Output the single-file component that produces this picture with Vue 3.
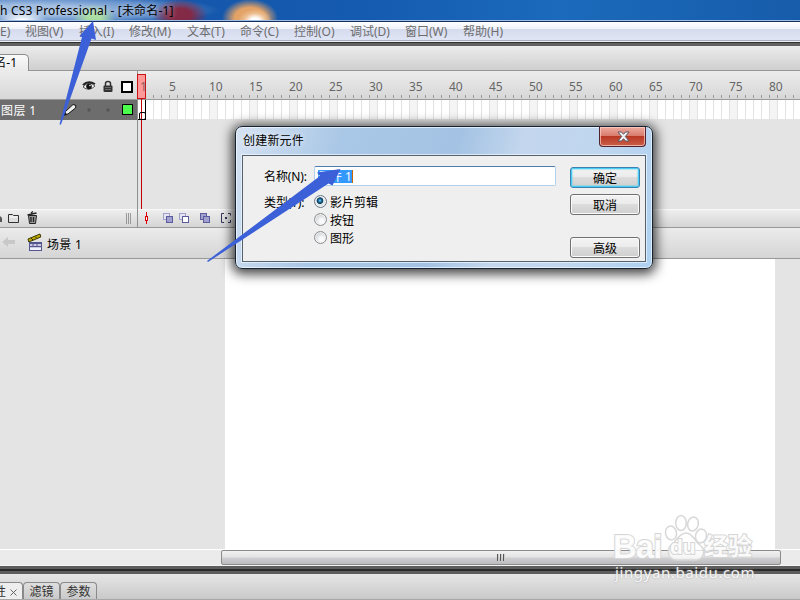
<script setup>
import { ref } from 'vue'

const menus = ['视图(V)', '插入(I)', '修改(M)', '文本(T)', '命令(C)', '控制(O)', '调试(D)', '窗口(W)', '帮助(H)']
const marks = Array.from({ length: 16 }, (_, i) => (i + 1) * 5)
const types = ['影片剪辑', '按钮', '图形']

const selectedType = ref('影片剪辑')
const dialogOpen = ref(true)

function closeDialog() {
  dialogOpen.value = false
}
</script>

<template>
  <div class="app">
    <header class="titlebar"><span class="titlebar__text">h CS3 Professional - [未命名-1]</span></header>

    <nav class="menubar">
      <span>E)</span>
      <span v-for="menu in menus" :key="menu">{{ menu }}</span>
    </nav>

    <div class="doc-tabs"><div class="doc-tab">名-1</div></div>

    <section class="timeline">
      <div class="layers">
        <div class="layers__head">
          <svg class="layers__icons" width="60" height="28" viewBox="0 0 60 28">
            <path d="M1 15Q7 8 13 14Q7 20 1 15Z" fill="#f6f6f6" stroke="#555" stroke-width="1" />
            <path d="M1 13Q6 8 13 12" fill="none" stroke="#222" stroke-width="2" />
            <circle cx="7" cy="14.5" r="2.8" fill="#111" />
            <circle cx="8" cy="13.5" r=".8" fill="#fff" />
            <path d="M23.500 14v-2.500q0-2 2.500-2t2.500 2v2.500" fill="none" stroke="#333" stroke-width="1.500" />
            <rect x="21.500" y="13.500" width="9" height="6.500" rx="1" fill="#333" />
            <path d="M23 15.500h6M23 17.500h6" stroke="#777" stroke-width=".8" />
            <rect x="40" y="10" width="10" height="10" fill="#fff" stroke="#000" stroke-width="2" />
          </svg>
        </div>
        <div class="layer">
          <span class="layer__name">图层 1</span>
          <svg class="layer__icons" width="80" height="20" viewBox="0 0 80 20">
            <path d="M7 15L8.500 11.500L16 4.500L19 5.500L18.500 8L11 14Z" fill="#eee" stroke="#111" stroke-width="1" />
            <path d="M6 16l4-1.500-2-2.500z" fill="#111" />
            <circle cx="32" cy="10" r="1.700" fill="#555" />
            <circle cx="51" cy="10" r="1.700" fill="#555" />
            <rect x="65.500" y="4.500" width="10" height="10" fill="#4cff4c" stroke="#000" />
          </svg>
        </div>
        <div class="layers__empty"></div>
        <div class="layers__foot">
          <svg width="137" height="18" viewBox="0 0 137 18">
            <path d="M0 6l2 2v4H0" fill="#555" />
            <path d="M8.500 4.500h4l1 1h5v7h-10z" fill="#ddd" stroke="#333" />
            <path d="M9.500 7h8" stroke="#fff" />
            <path d="M28.500 5.500h8l-1 8h-6z" fill="#999" stroke="#222" />
            <path d="M27.500 5l9-2M31 3l2-1.500M31 7v5M33.500 7v5" fill="none" stroke="#222" stroke-width="1.300" />
            <path d="M126.500 3v11M128.500 3v11M130.500 3v11" stroke="#999" />
          </svg>
        </div>
      </div>

      <div class="frames">
        <div class="ruler">
          <div class="ruler__marks">
            <span v-for="mark in marks" :key="mark">{{ mark }}</span>
          </div>
          <div class="ruler__ticks"></div>
        </div>
        <div class="frames__row"></div>
        <div class="frames__empty"></div>
        <div class="frames__foot">
          <svg width="100" height="18" viewBox="0 0 100 18">
            <path d="M8.500 2v12" stroke="#e00000" />
            <rect x="7.500" y="6.500" width="2" height="4" fill="#fff" stroke="#e00000" />
            <g stroke="#5c5c9c">
              <rect x="25.500" y="3.500" width="6" height="6" fill="#e5e5f2" stroke="#a0a0cc" />
              <rect x="28.500" y="6.500" width="6" height="6" fill="#a0a0d0" />
              <rect x="41.500" y="3.500" width="6" height="6" fill="#e5e5f2" stroke="#a0a0cc" />
              <rect x="44.500" y="6.500" width="6" height="6" fill="#fff" />
              <rect x="62.500" y="3.500" width="6" height="6" fill="#a0a0d0" />
              <rect x="65.500" y="6.500" width="6" height="6" fill="#a0a0d0" />
            </g>
            <path d="M86 3.500h-2.500v9h2.500M90 3.500h2.500v2M92.500 10v2.500H90" fill="none" stroke="#33335c" />
            <path d="M87 8h2" stroke="#33335c" stroke-width="2" />
          </svg>
        </div>
        <div class="playhead">1</div>
        <div class="keyframe"></div>
      </div>
    </section>

    <div class="scene">
      <svg width="44" height="30" viewBox="0 0 44 30">
        <path d="M2 14l6-5v3h7v4H8v3z" fill="#c8c8c8" />
        <path d="M28 11l12-5 .8 3-12 5z" fill="#bba900" stroke="#3b3800" />
        <path d="M31 10l2 2M35 8.500l2 2" stroke="#3b3800" />
        <rect x="29.500" y="14.500" width="12" height="8" fill="#f2f2ff" stroke="#55558f" />
        <path d="M29 15.500h13M29 18.500h13" stroke="#55558f" stroke-width="1.500" />
        <path d="M33 16v3M37 16v3" stroke="#55558f" />
      </svg>
      <span>场景 1</span>
    </div>

    <main class="stage"><div class="stage__canvas"></div></main>

    <div class="scrollbar">
      <div class="scrollbar__thumb"><i></i><i></i><i></i></div>
    </div>

    <footer class="panels">
      <div class="panel-tab panel-tab--active">性<svg width="7" height="7" viewBox="0 0 7 7"><path d="M.5.5l6 6M6.500.5l-6 6" stroke="#666" /></svg></div>
      <div class="panel-tab">滤镜</div>
      <div class="panel-tab">参数</div>
    </footer>

    <div v-if="dialogOpen" class="dialog">
      <div class="dialog__bar">
        <span class="dialog__title">创建新元件</span>
        <button type="button" class="dialog__close" @click="closeDialog">
          <svg width="13" height="11" viewBox="0 0 13 11">
            <path d="M1 1h3.500l2 2.300L8.500 1H12L8.300 5.500 12 10H8.500l-2-2.300L4.500 10H1l3.700-4.500z" fill="#f5f5f5" stroke="#555968" stroke-width="1" />
          </svg>
        </button>
      </div>
      <div class="dialog__body">
        <div class="form">
          <div class="form__row">
            <span class="form__label">名称(N):</span>
            <div class="form__input"><span>元件 1</span></div>
          </div>
          <div class="form__row form__row--types">
            <span class="form__label">类型(T):</span>
            <div class="types">
              <div v-for="type in types" :key="type" class="type" @click="selectedType = type">
                <i :class="['radio', { 'radio--on': selectedType === type }]"></i>{{ type }}
              </div>
            </div>
          </div>
        </div>
        <div class="buttons">
          <button type="button" class="btn btn--default" @click="closeDialog">确定</button>
          <button type="button" class="btn" @click="closeDialog">取消</button>
          <button type="button" class="btn btn--advanced">高级</button>
        </div>
      </div>
    </div>

    <svg class="arrows" width="800" height="600" viewBox="0 0 800 600">
      <path d="M93 21L96 40L91.500 38.500L61 124.500H59.500L82 37L79.500 36Z" fill="#3b60d8" />
      <path d="M340.500 169L332.500 185.500L328.500 183.500L208 262L207 261L320 176L317 172.500Z" fill="#3b60d8" />
    </svg>

    <div class="watermark">
      <svg class="watermark__paw" width="50" height="50" viewBox="0 0 50 50">
        <g fill="#fff" fill-opacity=".7" stroke="#d8d8d8" stroke-width="1.500">
          <ellipse cx="9" cy="19" rx="5.500" ry="7" transform="rotate(-12 9 19)" />
          <ellipse cx="19" cy="9" rx="5.300" ry="7.500" />
          <ellipse cx="31" cy="10" rx="5.300" ry="7" transform="rotate(12 31 10)" />
          <ellipse cx="39" cy="22" rx="5.500" ry="7" transform="rotate(12 39 22)" />
          <path d="M24 19C17 19 15 27 9 31C5 35 5 45 14 46H34C43 45 43 36 39 32C33 28 31 19 24 19Z" />
        </g>
      </svg>
      <div class="watermark__brand">
        <span class="watermark__bai">Bai</span><span class="watermark__du">du</span><span class="watermark__cn">经验</span>
      </div>
      <div class="watermark__url">jingyan.baidu.com</div>
    </div>
  </div>
</template>

<style>
body {
  overflow: hidden;
}
</style>

<style scoped>
.app {
  position: relative;
  display: flex;
  flex-direction: column;
  width: 800px;
  height: 600px;
  overflow: hidden;
  background: #e4e4e4;
  font-family: 'Noto Sans', 'Noto Sans CJK SC', sans-serif;
  font-size: 12px;
  color: #000;
  white-space: nowrap;
}

.app * {
  box-sizing: border-box;
}

svg {
  display: block;
  flex: none;
}

.titlebar {
  flex: none;
  height: 22px;
  line-height: 22px;
  border-bottom: 1px solid #16305c;
  box-shadow: inset 0 -1px #9dbce6;
  background:
    radial-gradient(ellipse 17px 12px at 255px 21px, #fff 25%, rgba(240, 200, 160, 0.7) 65%, transparent),
    radial-gradient(ellipse 28px 19px at 250px 18px, #e3a266 55%, transparent),
    radial-gradient(ellipse 28px 16px at 180px 15px, rgba(134, 38, 64, 0.95) 40%, transparent),
    radial-gradient(ellipse 22px 15px at 94px 19px, #a9dda0 30%, transparent),
    radial-gradient(ellipse 26px 12px at 22px 22px, #fff 20%, transparent),
    radial-gradient(ellipse 190px 17px at 30px 10px, #9ebbe0 30%, rgba(115, 156, 211, 0.8) 70%, transparent),
    linear-gradient(90deg, #1452a6, #155bb0 45%, #1b6abb 70%, #175cab);
}

.titlebar__text {
  letter-spacing: 0.18px;
  text-shadow: 0 0 5px rgba(255, 255, 255, 0.6);
}

.menubar {
  display: grid;
  grid-template-columns: 25px 54px 50px 58px 53px 54px 56px 55px 58px 60px;
  flex: none;
  height: 24px;
  line-height: 20px;
  color: #6d6d6d;
  border-bottom: 3px solid #626262;
  box-shadow: inset 0 -1px #303030, inset 0 -2px #eef0f6, inset 0 -3px #a9adbd;
  background: linear-gradient(#fff, #eff2fa 7px, #d5dbed 7px, #e0e5f6 18px);
}

.doc-tabs {
  flex: none;
  height: 25px;
  padding-top: 8px;
  border-bottom: 1px solid #969696;
  background: linear-gradient(#ececec, #cfcfcf);
}

.doc-tab {
  width: 29px;
  height: 17px;
  padding-right: 11px;
  display: flex;
  justify-content: flex-end;
  line-height: 15px;
  border: solid #8c8c8c;
  border-width: 1px 1px 0 0;
  border-radius: 0 5px 0 0;
  background: linear-gradient(#fafafa, #e9e9e9);
}

.timeline {
  display: flex;
  flex: none;
  height: 157px;
}

.layers {
  display: flex;
  flex-direction: column;
  width: 138px;
  border-right: 1px solid #909090;
}

.layers__head {
  height: 29px;
  padding: 1px 0 0 82px;
  overflow: hidden;
  border-bottom: 1px solid #999;
  background: linear-gradient(#ececec, #d7d7d7);
}

.layer {
  display: flex;
  justify-content: space-between;
  height: 20px;
  line-height: 21px;
  background: #6d6d6d;
  color: #fff;
}

.layer__name {
  width: 57px;
  padding-left: 1px;
  letter-spacing: 0.4px;
}

.layers__empty,
.frames__empty {
  flex: 1;
  background: #e4e4e4;
}

.layers__foot,
.frames__foot {
  height: 19px;
  border-top: 1px solid #f8f8f8;
  border-bottom: 1px solid #999;
  background: linear-gradient(#eee, #d5d5d5);
}

.frames {
  position: relative;
  display: flex;
  flex-direction: column;
  flex: 1;
}

.ruler {
  height: 29px;
  border-bottom: 1px solid #999;
  background: linear-gradient(#ececec, #d7d7d7);
}

.ruler__marks {
  display: flex;
  height: 24px;
  padding-left: 31px;
  line-height: 31px;
  color: #666;
}

.ruler__marks span {
  flex: none;
  width: 40px;
}

.ruler__ticks {
  height: 3px;
  margin-left: 15px;
  background: repeating-linear-gradient(90deg, #999 0 1px, transparent 1px 8px);
}

.frames__row {
  height: 19px;
  background:
    repeating-linear-gradient(90deg, transparent 0 7px, #e2e2e2 7px 8px),
    repeating-linear-gradient(90deg, transparent 0 32px, #f4f4f4 32px 40px),
    #fff;
}

.playhead {
  position: absolute;
  left: -1px;
  top: 3px;
  width: 9px;
  height: 25px;
  padding-left: 2px;
  line-height: 24px;
  border: 1px solid #c81414;
  background: #ff9999;
  color: #87605f;
}

.playhead::after {
  content: '';
  position: absolute;
  left: 3px;
  top: 24px;
  width: 1px;
  height: 110px;
  background: #c00000;
}

.keyframe {
  position: absolute;
  left: 0;
  top: 29px;
  width: 8px;
  height: 20px;
  border: solid #000;
  border-width: 0 1px 1px 0;
}

.keyframe::after {
  content: '';
  position: absolute;
  left: 1px;
  top: 12px;
  width: 5px;
  height: 6px;
  border: 1px solid #000;
  border-radius: 2px;
}

.scene {
  display: flex;
  align-items: center;
  gap: 3px;
  flex: none;
  height: 31px;
  border-bottom: 1px solid #999;
  background: linear-gradient(#ebebeb, #d5d5d5);
}

.scene span {
  padding-top: 1px;
  letter-spacing: 0.3px;
}

.stage {
  display: flex;
  flex: none;
  height: 290px;
  padding: 0 25px 0 225px;
}

.stage__canvas {
  flex: 1;
  background: #fff;
}

.scrollbar {
  flex: none;
  height: 25px;
  padding: 0 19px 0 221px;
  border-top: 1px solid #fff;
  border-bottom: 8px solid #5d5d5d;
  background: #ebebeb;
  box-shadow: inset 0 -1px #f4f4f4;
}

.scrollbar__thumb {
  display: flex;
  justify-content: center;
  gap: 1px;
  height: 15px;
  padding-top: 3px;
  border: 1px solid #8b8b8b;
  border-radius: 2px;
  background: linear-gradient(#f1f1f1, #e3e3e4 6px, #cfcfd1 7px, #bcbcbe);
}

.scrollbar__thumb i {
  width: 2px;
  height: 7px;
  background: #555;
  border-right: 1px solid #ccc;
}

.panels {
  position: relative;
  display: flex;
  align-items: flex-end;
  flex: none;
  height: 26px;
  border-bottom: 1px solid #a8a8a8;
  background: linear-gradient(#e6e6e6, #c9c9c9);
}

/* groove between the stage and the property panels */
.panels::before {
  content: '';
  position: absolute;
  left: 0;
  top: -5px;
  width: 100%;
  height: 2px;
  background: #292929;
}

.panel-tab {
  display: flex;
  align-items: center;
  justify-content: center;
  gap: 4px;
  width: 37px;
  height: 17px;
  padding-top: 2px;
  border: 1px solid #8a8a8a;
  border-bottom: 0;
  border-radius: 4px 4px 0 0;
  line-height: 16px;
  color: #333;
  background: linear-gradient(#dfdfdf, #c9c9c9);
}

.panel-tab--active {
  width: 23px;
  justify-content: flex-end;
  padding-right: 5px;
  border-left: 0;
  border-top-left-radius: 0;
  background: #eee;
}

.dialog {
  position: absolute;
  left: 235px;
  top: 126px;
  width: 418px;
  height: 143px;
  padding: 0 6px 6px;
  border: 1px solid #172332;
  border-radius: 7px;
  box-shadow: 0 2px 12px 3px rgba(0, 0, 0, 0.75), inset 0 0 0 1px rgba(240, 248, 255, 0.75);
  background:
    linear-gradient(105deg, #d5e2f2 0, #a9c7e6 24%, #a4c3e4 50%, #c3d6ed 64%, #bfd6ef 82%, #aed0f1);
}

.dialog__bar {
  display: flex;
  justify-content: space-between;
  height: 28px;
}

.dialog__title {
  padding-left: 1px;
  line-height: 28px;
  letter-spacing: 0.2px;
  text-shadow: 0 0 6px #fff;
}

.dialog__close {
  display: flex;
  align-items: center;
  justify-content: center;
  width: 47px;
  height: 20px;
  padding: 0 0 1px 2px;
  border: 1px solid #4e2430;
  border-top: 0;
  border-radius: 0 0 4px 4px;
  background: linear-gradient(#eeaaa0, #d87b6c 9px, #b93622 9px, #c85f49);
  box-shadow: inset 0 0 0 1px rgba(255, 210, 200, 0.7);
}

.dialog__body {
  display: flex;
  justify-content: space-between;
  height: 107px;
  padding: 10px 5px 0 21px;
  border: 1px solid #56616e;
  background: #efefef;
  box-shadow: 0 0 0 1px rgba(240, 248, 255, 0.7);
}

.form {
  width: 292px;
}

.form__row {
  display: flex;
  height: 20px;
  line-height: 21px;
}

.form__row--types {
  height: 54px;
  margin-top: 7px;
  line-height: 19px;
}

.form__label {
  width: 50px;
  letter-spacing: -0.1px;
}

.form__input {
  display: flex;
  align-items: center;
  flex: 1;
  padding-left: 3px;
  border: 1px solid #b2d0e9;
  border-top-color: #4d7ead;
  border-radius: 2px;
  background: #fff;
}

.form__input span {
  height: 13px;
  line-height: 13px;
  width: 35px;
  background: #3399ff;
  border-right: 1px solid #cc6600;
  color: #fff;
}

.type {
  display: flex;
  align-items: center;
  gap: 3px;
  height: 18px;
}

.radio {
  width: 13px;
  height: 13px;
  margin-top: -1px;
  border: 1px solid #8a8e92;
  border-radius: 50%;
  background: radial-gradient(circle at 60% 65%, #fafafa 20%, #c4c9ce 80%);
  box-shadow: inset 0 0 0 1px #f4f4f4;
}

.radio--on {
  border-color: #6a7a88;
  background: radial-gradient(circle at 45% 42%, #7fdcff 0, #1d6d9d 18%, #0f3956 34%, #e0e5e8 42%);
}

.buttons {
  display: flex;
  flex-direction: column;
  padding-top: 1px;
}

.btn {
  width: 70px;
  height: 21px;
  margin-bottom: 6px;
  padding: 1px 0 0;
  border: 1px solid #707070;
  border-radius: 3px;
  background: linear-gradient(#f3f3f3, #ebebeb 49%, #dcdcdc 50%, #cfcfcf);
  box-shadow: inset 0 0 0 1px #fbfbfb;
  font: inherit;
  line-height: 19px;
}

.btn--default {
  border-color: #3c7fb1;
  box-shadow: inset 0 0 0 1px #48cdf4, inset 0 0 1px 2px rgba(72, 205, 244, 0.35);
}

.btn--advanced {
  margin-top: 16px;
}

.arrows {
  position: absolute;
  left: 0;
  top: 0;
  pointer-events: none;
}

.watermark {
  position: absolute;
  left: 613px;
  top: 513px;
  width: 160px;
  height: 72px;
  color: rgba(255, 255, 255, 0.9);
}

.watermark__paw {
  position: absolute;
  left: 49px;
  top: 1px;
}

.watermark__brand {
  position: relative;
  display: flex;
  height: 52px;
  padding-top: 16px;
  line-height: 36px;
  font-family: 'Liberation Sans', 'Noto Sans CJK SC', sans-serif;
  font-weight: 700;
  -webkit-text-stroke: 2px #d6d6d6;
  paint-order: stroke;
}

.watermark__bai {
  width: 57px;
  font-size: 33px;
  letter-spacing: -1px;
}

.watermark__du {
  width: 34px;
  font-size: 21px;
}

.watermark__cn {
  font-size: 24px;
}

.watermark__url {
  position: relative;
  padding-left: 2px;
  line-height: 14px;
  font-size: 15px;
  letter-spacing: 0.6px;
  text-shadow: 0 0 2px #999;
}
</style>
